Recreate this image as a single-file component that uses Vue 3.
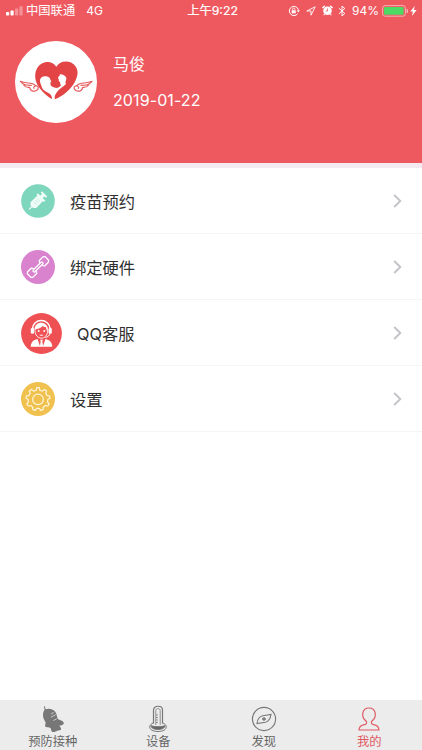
<script setup>
const rows = [
  { id: 'vaccine', label: '疫苗预约' },
  { id: 'bind', label: '绑定硬件' },
  { id: 'service', label: 'QQ客服' },
  { id: 'settings', label: '设置' }
]
const tabs = [
  { id: 'plan', label: '预防接种' },
  { id: 'device', label: '设备' },
  { id: 'discover', label: '发现' },
  { id: 'mine', label: '我的', active: true }
]
</script>

<template>
  <div class="screen">
    <header class="header">
      <div class="status">
        <div class="side left">
          <svg class="signal" width="17" height="10" viewBox="0 0 17 10" fill="#fff">
            <rect x="0" y="6" width="3.2" height="3.6" rx="0.8" />
            <rect x="4.5" y="4.5" width="3.2" height="5.1" rx="0.8" />
            <rect x="9" y="2.5" width="3.2" height="7.1" rx="0.8" opacity="0.35" />
            <rect x="13.4" y="0.2" width="3.2" height="9.4" rx="0.8" opacity="0.35" />
          </svg>
          <span class="carrier">中国联通</span>
          <span class="net">4G</span>
        </div>
        <div class="time">上午9:22</div>
        <div class="side right">
          <svg width="12" height="12" viewBox="0 0 12 12" fill="none" stroke="#fff">
            <path d="M9.6 8.8A4.6 4.6 0 1 1 10.4 4.8" stroke-width="1" />
            <path d="M8.7 5.2h3.2l-1.6 2.2z" fill="#fff" stroke="none" />
            <rect x="3.7" y="5.3" width="4" height="3" fill="#fff" stroke="none" />
            <path d="M4.5 5.5V4.3a1.2 1.2 0 0 1 2.4 0v1.2" stroke-width=".8" />
          </svg>
          <svg class="loc" width="10" height="10" viewBox="0 0 10 10" fill="none" stroke="#fff">
            <path d="M.8 5L9.2.8 5 9.2V5z" stroke-width=".9" stroke-linejoin="round" />
          </svg>
          <svg class="alarm" width="11" height="11" viewBox="0 0 11 11">
            <path d="M.9 2.600L2.500 1.200M10.100 2.600L8.500 1.200" stroke="#fff" stroke-width="1.500" stroke-linecap="round" />
            <circle cx="5.500" cy="5.800" r="4.300" fill="#fff" />
            <path d="M5.500 3.500v2.500H3.800" fill="none" stroke="#ee5960" stroke-width=".8" />
            <path d="M2.500 9L1.800 10.200M8.500 9l.7 1.200" stroke="#fff" stroke-width="1.100" />
          </svg>
          <svg class="bt" width="8" height="12" viewBox="0 0 8 12" fill="none" stroke="#fff">
            <path d="M.9 3.200L6.800 8.500 4 11V1L6.800 3.500.9 8.800" stroke-width="1" />
          </svg>
          <span class="pct">94%</span>
          <svg class="battery" width="26" height="12" viewBox="0 0 26 12">
            <rect x=".6" y=".6" width="22.800" height="10.600" rx="2.500" fill="none" stroke="#f8b0b1" />
            <rect x="2" y="2" width="19.600" height="7.800" rx="1" fill="#4cd964" />
            <path d="M24.500 4a2 2 0 0 1 0 4z" fill="#f8b0b1" />
          </svg>
          <svg class="bolt" width="7" height="10" viewBox="0 0 7 10" fill="#fff">
            <path d="M4.700 0L.4 5.600h2.500L2 10l4.600-6H4z" />
          </svg>
        </div>
      </div>
      <div class="profile">
        <svg class="avatar" width="82" height="82" viewBox="15 15 246 246">
          <circle cx="138" cy="138" r="123" fill="#fff" />
          <path d="M139 92C126 70 92 74 80 99c-10 22-2 44 11 60 10 13 22 23 36 31h8c24-9 47-29 59-51 9-16 12-32 4-46-14-22-47-21-59-1z" fill="#e34446" />
          <path d="M90 132c1-8 10-13 19-11 7 1 12 5 12 10l3 5-3 4 1 8c5 6 12 8 19 8 5-1 9-4 12-8-3-3-2-6-3-10-3-2-5-5-4-9l-4-3 4-9c3-4 10-3 16 1 6 4 9 9 6 15-2 5-2 8 0 11-8 9-20 14-27 24-6 8-9 15-6 23l-4 6-5-4c1-9-1-14-6-19-9-8-22-10-25-22-1-6-5-8-5-20z" fill="#fff" />
          <path d="M134 120l11-6 6 2-7 8 1 7-6 3z" fill="#e34446" />
          <g fill="none" stroke="#e55b5c" stroke-width="3.500" stroke-linecap="round" stroke-linejoin="round">
            <path d="M76 148C65 138 50 144 31 136c4 7 9 9 16 11l-6 0c5 7 11 8 18 7 1 8 8 13 17 11 9-3 12-12 5-15-6-2-12 3-9 7M48 147l16 1" />
            <path d="M201 148c11-10 26-4 45-12-4 7-9 9-16 11h6c-5 7-11 8-18 7-1 8-8 13-17 11-9-3-12-12-5-15 6-2 12 3 9 7M229 147l-16 1" />
          </g>
        </svg>
        <div class="who">
          <div class="name">马俊</div>
          <div class="date">2019-01-22</div>
        </div>
      </div>
    </header>

    <main class="menu">
      <div v-for="row in rows" :key="row.id" class="row">
        <svg v-if="row.id === 'vaccine'" class="icon" width="34" height="34" viewBox="0 0 34 34">
          <circle cx="17" cy="17" r="16.800" fill="#7ed6bc" />
          <g transform="translate(16.200 17.300) rotate(45) scale(1 .96)" fill="#effcf7">
            <path d="M-4-5.200H4V5.600L1.800 8H-1.800L-4 5.600z" />
            <rect x="-5.300" y="-6.500" width="10.600" height="2" />
            <rect x="-1.800" y="-9.500" width="3.600" height="4" />
            <rect x="-3.700" y="-11" width="7.400" height="2" />
            <path d="M0 7v5" stroke="#effcf7" stroke-width="1.200" />
            <path d="M-2-2H2M-2 .5H2M-2 3H2" stroke="#b4e9d9" stroke-width=".8" />
          </g>
        </svg>
        <svg v-else-if="row.id === 'bind'" class="icon" width="34" height="34" viewBox="0 0 34 34">
          <circle cx="17" cy="17" r="17" fill="#d983cf" />
          <g transform="translate(17 17) rotate(-44)" fill="none" stroke="#fff" stroke-width="1.300" stroke-linejoin="round">
            <path d="M-4.500-1.200V-2.500L-5.500-3.800H-11L-12.300-2.500V2.500L-11 3.800H-5.500L-4.500 2.500V1.200M4.500-1.200V-2.500L5.500-3.800H11L12.300-2.500V2.500L11 3.800H5.500L4.500 2.500V1.200" />
            <rect x="-6.500" y="-1.200" width="13" height="2.400" rx="1" />
          </g>
        </svg>
        <svg v-else-if="row.id === 'service'" class="icon" width="41" height="41" viewBox="0 0 41 41">
          <circle cx="20.500" cy="20.500" r="20.400" fill="#ef5053" />
          <path d="M11.500 16.500C11.500 4.500 29 4.500 29 16.500" fill="none" stroke="#fff" stroke-width="1.300" />
          <path d="M13.600 17.500C12.600 7.200 27.600 7.200 26.900 17.500l-1 .3-1.200-3.900c-1.300.1-2.400-.3-3.200-1-1.300 1.800-3.400 2.800-6 3z" fill="#fff" />
          <path d="M14 17.500c.2 4.800 3 7.700 6.300 7.700s6.200-2.900 6.500-7.700" fill="none" stroke="#fff" stroke-width=".9" />
          <circle cx="17.700" cy="18" r="1" fill="#fff" /><circle cx="23.300" cy="18" r="1" fill="#fff" />
          <path d="M18.300 21.700h4.200c-.7 1.400-3.500 1.400-4.200 0z" fill="#fff" />
          <rect x="9.800" y="14.800" width="3.300" height="6" rx="1.500" fill="#fff" />
          <rect x="27.500" y="14.800" width="3.300" height="6" rx="1.500" fill="#fff" />
          <path d="M29 20c-.3 2.700-2.200 4-4.600 4.400" fill="none" stroke="#fff" />
          <path d="M9.700 33.700c.4-4.700 2.500-6.800 6.800-7.700l2.700 7.700zM31.300 33.700c-.4-4.700-2.500-6.800-6.800-7.700l-2.700 7.700z" fill="#fff" />
          <path d="M19.200 26.700h2.600l-.5 1.700.8 5.300h-3.200l.8-5.300z" fill="#fff" />
        </svg>
        <svg v-else class="icon" width="34" height="34" viewBox="0 0 34 34">
          <circle cx="17" cy="17" r="17" fill="#f0c14f" />
          <g fill="none" stroke="#fff6dc" stroke-width="1.200" stroke-linejoin="round">
            <path d="M15.200 8.200 15.700 5.700H18.300L18.800 8.200 21.500 9.100 23.500 7.400 25.700 9 24.700 11.400 26.300 13.600 28.600 13.800 29 16.300 26.800 17.500 26.600 20.200 28.200 22 26.900 24 24.400 23.500 22.200 25.200 22.200 27.600 19.700 28.300 18.300 26.300H15.700L14.300 28.300 11.800 27.600V25.200L9.600 23.500 7.100 24 5.800 22 7.400 20.200 7.200 17.500 5 16.300 5.400 13.800 7.700 13.600 9.300 11.400 8.300 9 10.500 7.400 12.500 9.100z" />
            <circle cx="17" cy="17.400" r="5.300" />
          </g>
        </svg>
        <span class="label">{{ row.label }}</span>
        <svg class="chevron" width="9" height="14" viewBox="0 0 9 14" fill="none" stroke="#c4c4c8" stroke-width="1.900">
          <path d="M1.200 1L7.300 7 1.200 13" />
        </svg>
      </div>
    </main>

    <nav class="tabbar">
      <div v-for="tab in tabs" :key="tab.id" class="tab" :class="{ active: tab.active }">
        <svg v-if="tab.id === 'plan'" width="24" height="28" viewBox="0 0 24 28" fill="#777">
          <path d="M3 1C4 1 4.400 2.500 4.500 4.300 7.500 3.300 11.500 3.600 14 6.500c1.900 2.200 1.700 4.700 2.700 7.200 1.500 1.700 5.400 1.500 6 4 .4 2-2.100 2.700-4.300 2.900.4 1.200 2.100 2.500 1.600 4-.5 1.200-2.300.7-3.700 1.200-1.600.6-2.900 1.700-4.700 1.100-1.900-.5-1.200-2.500-2.100-3.800-1.600-1.200-4.500-.3-5.300-1.900-.6-1.500 1-2.600.2-4.200C3 14.700 2 12.700 2 10c0-2.200.7-3.800 1.500-5.200z" />
          <path d="M9.800 9l3-1.500M9.800 12.200l5-2.500M12.300 15.500l3.500-1.700" stroke="#dedede" stroke-width=".8" />
        </svg>
        <svg v-else-if="tab.id === 'device'" width="20" height="28" viewBox="0 0 20 28" fill="none" stroke="#777">
          <path d="M5.500 18.500V5c0-5 9-5 9 0v13.500" stroke-width="1.200" />
          <path d="M7.800 20V5.500c0-2.500 4.400-2.500 4.400 0V20" stroke-width=".8" />
          <path d="M8 10h2M8 12.500h2M8 15h2M8 17.500h2" stroke-width=".8" />
          <path d="M5.500 17.800C-.8 20.200.8 26.500 10 26.500s10.800-6.300 4.500-8.700" />
          <path d="M3.300 20.500c1.700 1.500 11.700 1.500 13.400 0 1.300 5.300-14.700 5.300-13.400 0z" fill="#686868" />
        </svg>
        <svg v-else-if="tab.id === 'discover'" width="26" height="28" viewBox="0 0 26 28" fill="none" stroke="#777" stroke-width="1.100">
          <circle cx="13" cy="14" r="11.600" />
          <path d="M6 18.500c.4-3.900 2.600-7 5.800-7.700L20 9.500c-.6 4-2.300 7-5.600 7.700z" />
          <path d="M13 12v4M11 14h4" stroke-width="1.300" />
        </svg>
        <svg v-else width="24" height="28" viewBox="0 0 24 28" fill="none" stroke="#df5963" stroke-width="1.200" stroke-linejoin="round">
          <path d="M9.500 16.500C3.800 12.500 4.500 3 12 3s8.200 9.500 2.500 13.500c-.4 2.200.5 3 3 3.400 3 .6 4.200 2 4.500 5.100H2c.3-3.100 1.500-4.500 4.500-5.100 2.500-.4 3.400-1.200 3-3.400z" />
        </svg>
        <span>{{ tab.label }}</span>
      </div>
    </nav>
  </div>
</template>

<style>
body {
  margin: 0;
}
</style>

<style scoped>
.screen {
  width: 422px;
  height: 750px;
  display: flex;
  flex-direction: column;
  overflow: hidden;
  background: #fff;
  font-family: Inter, "Noto Sans CJK SC", sans-serif;
}
svg {
  display: block;
  flex: none;
}
.header {
  box-sizing: border-box;
  height: 163px;
  background: #ee5960;
  color: #fff;
}
.status {
  height: 21px;
  display: flex;
  align-items: center;
  font-size: 12px;
  line-height: 20px;
}
.side {
  flex: 1;
  display: flex;
  align-items: center;
}
.left {
  padding-left: 6px;
}
.carrier {
  margin-left: 3px;
  font-size: 12.300px;
}
.net {
  margin-left: 11px;
}
.time {
  padding: 1px 0 0 2px;
  font-size: 12.300px;
  -webkit-text-stroke: 0.2px #fff;
}
.right {
  justify-content: flex-end;
  padding-right: 5px;
}
.loc {
  margin-left: 6px;
}
.alarm {
  margin-left: 6px;
}
.bt {
  margin-left: 5px;
}
.pct {
  margin-left: 6px;
}
.battery {
  margin-left: 3px;
}
.bolt {
  margin-left: 2px;
}
.profile {
  display: flex;
  padding: 20px 0 0 15px;
}
.who {
  padding: 11px 0 0 16px;
  font-size: 16px;
  line-height: 24px;
}
.date {
  margin-top: 12px;
  letter-spacing: 0.1px;
}
.menu {
  flex: 1;
  border-top: 5px solid #f3ebf1;
}
.row {
  box-sizing: border-box;
  height: 66px;
  display: flex;
  align-items: center;
  padding: 1px 20px 0 21px;
  border-bottom: 1px solid #f5f5f5;
}
.label {
  flex: 1;
  margin-left: 15px;
  font-size: 16.300px;
  color: #303030;
}
.tabbar {
  height: 50px;
  display: grid;
  grid-template-columns: repeat(4, 1fr);
  background: #ececec;
}
.tab {
  display: flex;
  flex-direction: column;
  align-items: center;
  padding-top: 5px;
  font-size: 12.300px;
  line-height: 17px;
  color: #666;
}
.tab.active {
  color: #df5963;
}
</style>
